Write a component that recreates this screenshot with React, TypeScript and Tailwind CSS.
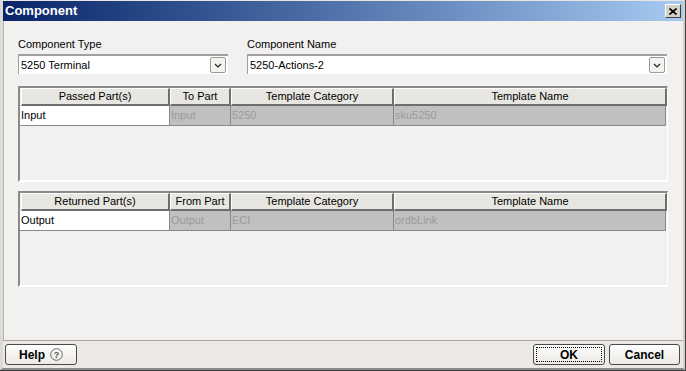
import React from "react";

const font = { fontFamily: '"Liberation Sans", Arial, sans-serif' };

function Chevron() {
  return (
    <svg width="8" height="5" viewBox="0 0 8 5">
      <polyline points="1,1 4,4 7,1" fill="none" stroke="#222" strokeWidth="1.2" />
    </svg>
  );
}

function Select({ value, width }: { value: string; width: string }) {
  return (
    <div className={`flex h-[20px] ${width} items-center border-t-2 border-l border-t-[#a0a0a0] border-l-[#a0a0a0] bg-white pl-[2px] pr-[2px]`}>
      <span className="flex-1 text-[11px] text-black">{value}</span>
      <div className="flex h-[16px] w-[16px] items-center justify-center rounded-[2px] border border-[#9a9a9a] bg-[#f4f3f0]">
        <Chevron />
      </div>
    </div>
  );
}

const cols = ["w-[149px]", "w-[61px]", "w-[163px]", "w-[273px]"];

function Table({ headers, row }: { headers: string[]; row: string[] }) {
  return (
    <div className="flex h-[96px] w-[650px] flex-col border-t-2 border-l-2 border-r border-b-2 border-t-[#8a8a8a] border-l-[#8a8a8a] border-r-white border-b-white bg-[#f2f1ef]">
      <div className="flex h-[18px] pl-[1px]">
        {headers.map((h, i) => (
          <div
            key={h}
            className={`${cols[i]} flex items-center justify-center border-t border-l border-r-2 border-b-2 border-t-white border-l-white border-r-[#6e6e6e] border-b-[#6e6e6e] bg-[#e8e6e1] text-[11px] text-black`}
          >
            {h}
          </div>
        ))}
      </div>
      <div className="flex h-[20px]">
        {row.map((c, i) => (
          <div
            key={i}
            className={`${cols[i]} flex items-center border-b border-[#8a8a8a] ${
              i === 0
                ? "bg-white text-black"
                : "border-l border-l-[#8a8a8a] bg-[#c0c0c0] text-[#9b9b9b]"
            } ${i === 3 ? "border-r border-r-[#8a8a8a]" : ""} text-[11px] pl-[1px]`}
          >
            {c}
          </div>
        ))}
      </div>
      <div className="flex-1" />
    </div>
  );
}

function Button({ children, focus, width }: { children: React.ReactNode; focus?: boolean; width: string }) {
  return (
    <div className={`flex h-[21px] ${width} items-center justify-center rounded-[3px] border border-[#4a4a4a] bg-gradient-to-b from-[#fdfdfc] to-[#eceae6] p-[2px]`}>
      <div
        className={`flex h-full w-full items-center justify-center gap-[5px] text-[12px] font-bold text-black ${
          focus ? "border border-dotted border-black" : ""
        }`}
      >
        {children}
      </div>
    </div>
  );
}

export default function App() {
  return (
    <div
      className="flex h-[371px] w-[686px] flex-col border-r border-b border-r-[#404040] border-b-[#404040] bg-[#d4d0c8]"
      style={font}
    >
      <div className="flex flex-1 flex-col border-t border-l-[3px] border-r-[2px] border-b-[2px] border-t-[#e8e6e1] border-l-[#dcdad5] border-r-[#d4d0c8] border-b-[#8a8a8a]">
        {/* Title bar */}
        <div className="flex h-[20px] items-center justify-between bg-gradient-to-r from-[#0a246a] to-[#a6caf0] pl-[2px] pr-[2px]">
          <span className="text-[13px] font-bold text-white">Component</span>
          <div className="flex h-[14px] w-[16px] items-center justify-center border-t border-l border-r border-b border-t-white border-l-white border-r-[#404040] border-b-[#404040] bg-[#d4d0c8]">
            <svg width="8" height="7" viewBox="0 0 8 7">
              <path d="M0.5 0.5 L7.5 6.5 M7.5 0.5 L0.5 6.5" stroke="#000" strokeWidth="1.6" />
            </svg>
          </div>
        </div>
        {/* Body */}
        <div className="flex flex-1 flex-col border-l border-l-[#b8b6b2] bg-[#f2f1ef] pl-[14px] pt-[17px]">
          <div className="flex gap-[19px]">
            <div className="flex flex-col gap-[3px]">
              <span className="text-[11px] leading-[13px] text-black">Component Type</span>
              <Select value="5250 Terminal" width="w-[210px]" />
            </div>
            <div className="flex flex-col gap-[3px]">
              <span className="text-[11px] leading-[13px] text-black">Component Name</span>
              <Select value="5250-Actions-2" width="w-[420px]" />
            </div>
          </div>
          <div className="mt-[12px] flex flex-col gap-[9px]">
            <Table
              headers={["Passed Part(s)", "To Part", "Template Category", "Template Name"]}
              row={["Input", "Input", "5250", "sku5250"]}
            />
            <Table
              headers={["Returned Part(s)", "From Part", "Template Category", "Template Name"]}
              row={["Output", "Output", "ECI", "ordbLink"]}
            />
          </div>
        </div>
        {/* Bottom bar */}
        <div className="flex h-[28px] items-center justify-between border-t border-t-[#a8a6a2] bg-[#ece9e4] pl-[2px] pr-[3px]">
          <Button width="w-[72px]">
            <span>Help</span>
            <svg width="13" height="13" viewBox="0 0 13 13">
              <circle cx="6.5" cy="6.5" r="5.8" fill="none" stroke="#666" strokeWidth="1" />
              <text x="6.5" y="10" textAnchor="middle" fontSize="9" fill="#555" fontFamily="Liberation Sans, Arial, sans-serif">?</text>
            </svg>
          </Button>
          <div className="flex gap-[4px]">
            <Button width="w-[72px]" focus>
              OK
            </Button>
            <Button width="w-[71px]">Cancel</Button>
          </div>
        </div>
      </div>
    </div>
  );
}
